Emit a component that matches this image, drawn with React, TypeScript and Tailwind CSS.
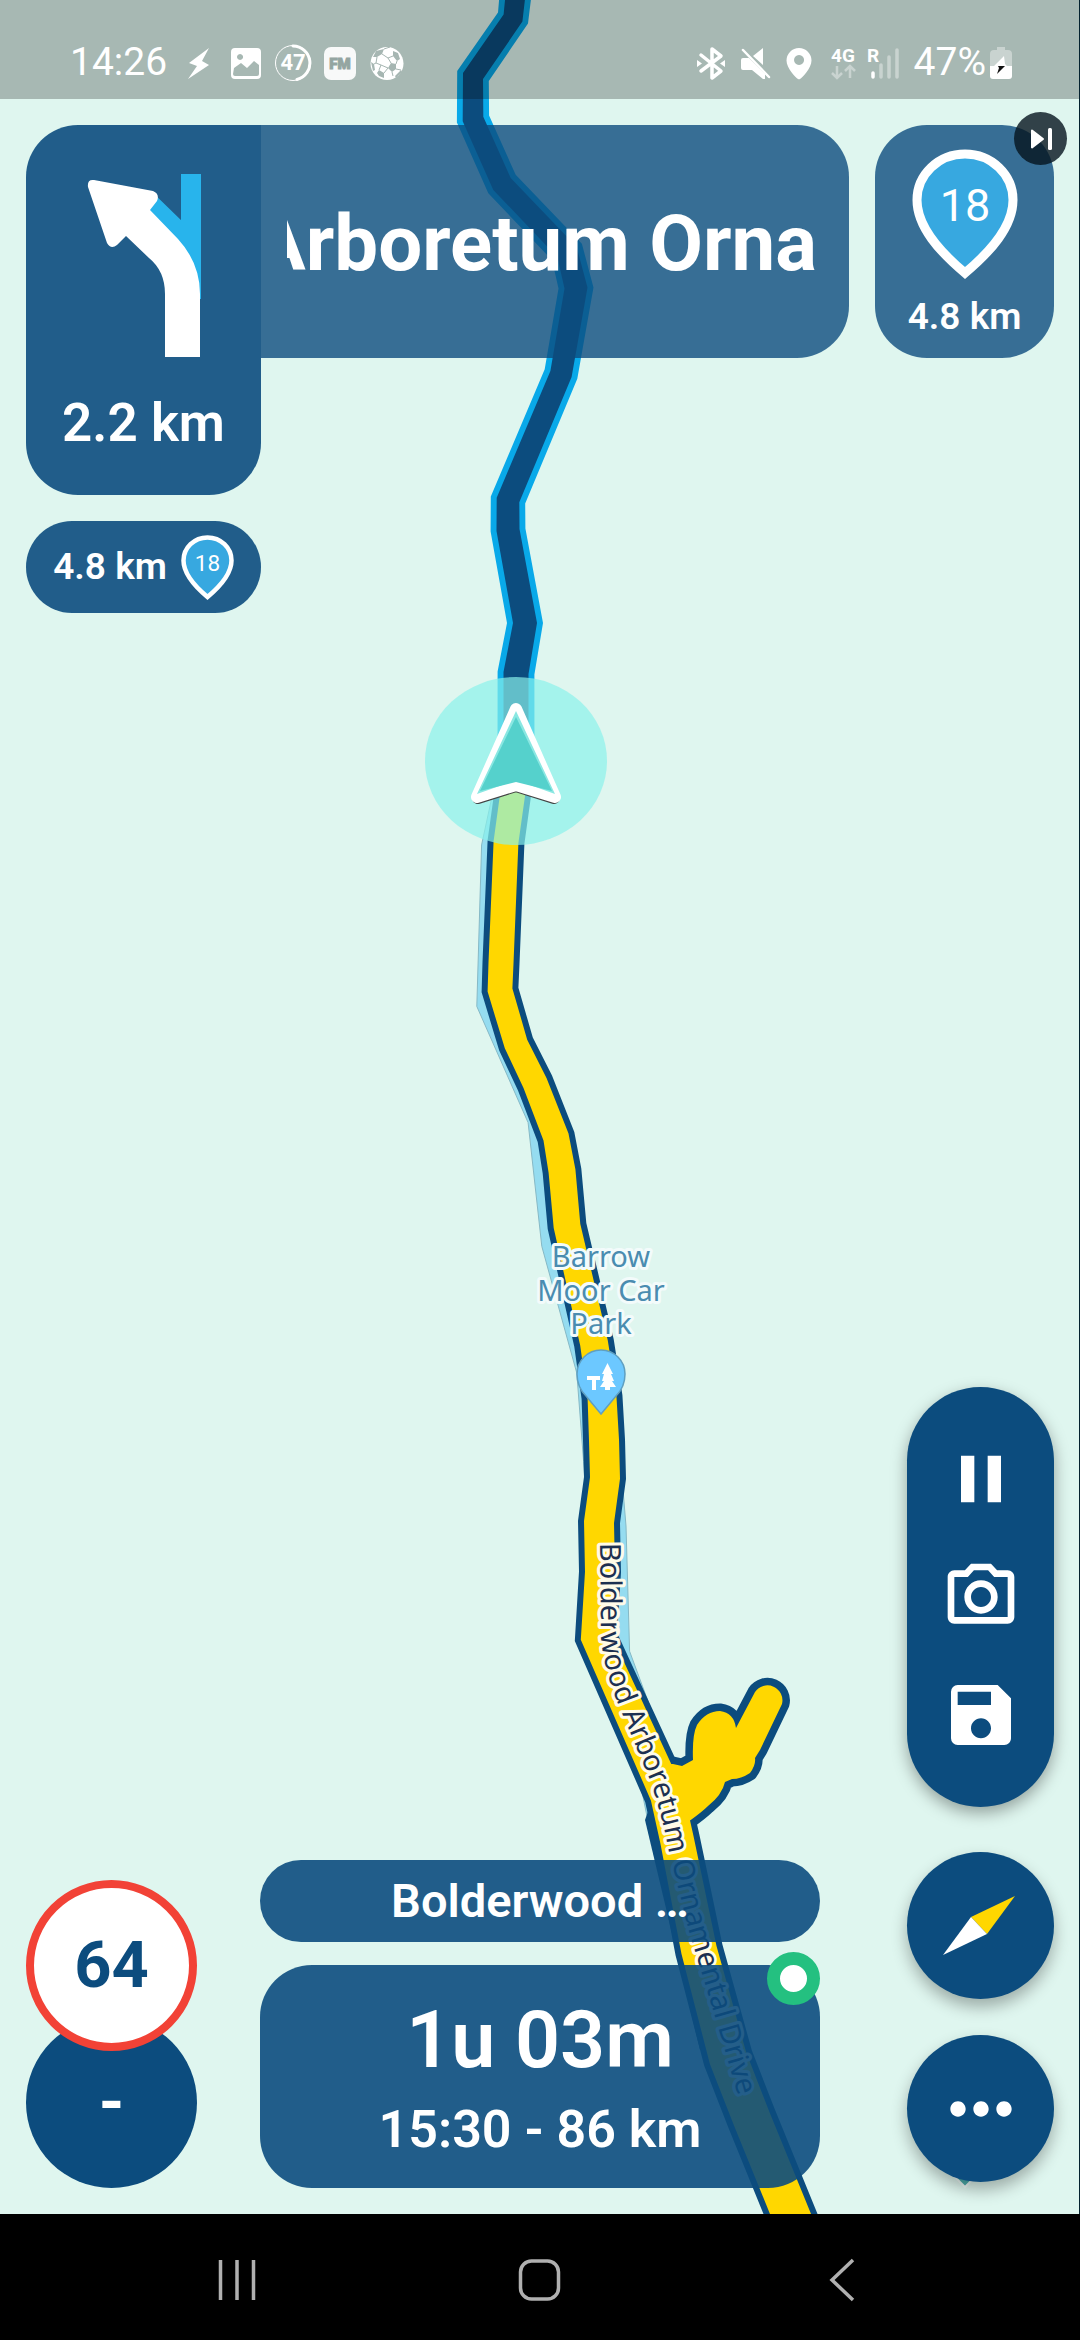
import { MdMoreHoriz, MdOutlineCameraAlt, MdPause, MdSave } from "react-icons/md";

type RoadPoint = [x: number, y: number, width: number];

// Builds a closed outline around a centre line whose width changes along the way
function ribbon(points: RoadPoint[], inset = 0) {
  const left: string[] = [];
  const right: string[] = [];
  points.forEach(([x, y, width], i) => {
    const prev = points[Math.max(i - 1, 0)];
    const next = points[Math.min(i + 1, points.length - 1)];
    const inLen = Math.hypot(x - prev[0], y - prev[1]) || 1;
    const outLen = Math.hypot(next[0] - x, next[1] - y) || 1;
    const dx = (x - prev[0]) / inLen + (next[0] - x) / outLen;
    const dy = (y - prev[1]) / inLen + (next[1] - y) / outLen;
    const len = Math.hypot(dx, dy);
    const half = width / 2 - inset;
    const nx = (-dy / len) * half;
    const ny = (dx / len) * half;
    left.push(`${(x + nx).toFixed(1)},${(y + ny).toFixed(1)}`);
    right.unshift(`${(x - nx).toFixed(1)},${(y - ny).toFixed(1)}`);
  });
  return [...left, ...right].join(" ");
}

const travelled: RoadPoint[] = [
  [516, -10, 32],
  [513, 18, 32],
  [473, 76, 33],
  [473, 119, 33],
  [502, 184, 33],
  [567, 252, 34],
  [576, 288, 35],
  [561, 374, 34],
  [508, 500, 35],
  [508, 530, 35],
  [525, 623, 36],
  [516, 673, 37],
  [516, 780, 37],
];

const ahead: RoadPoint[] = [
  [516, 770, 37],
  [506, 842, 37],
  [501, 963, 37],
  [500, 990, 37],
  [516, 1044, 36],
  [535, 1083, 37],
  [556, 1137, 38],
  [562, 1171, 39],
  [567, 1226, 39],
  [594, 1343, 40],
  [602, 1397, 41],
  [604, 1440, 42],
  [605, 1478, 42],
  [599, 1522, 42],
  [600, 1572, 42],
  [596, 1637, 43],
  [667, 1795, 46],
  [677, 1840, 46],
  [699, 1950, 48],
  [728, 2058, 50],
  [751, 2117, 50],
  [795, 2225, 50],
];

const sideStreet: RoadPoint[] = [
  [514, 775, 34],
  [499, 847, 35],
  [494, 1003, 35],
  [545, 1118, 35],
  [559, 1243, 35],
  [594, 1370, 35],
  [602, 1460, 37],
  [607, 1527, 38],
  [611, 1655, 38],
  [658, 1780, 36],
  [664, 1820, 32],
];

const carPark =
  "M655 1764 L673 1764 L682 1766 L693 1760 Q692 1735 697 1725 Q706 1711 720 1711 Q734 1713 736 1728 L755 1692 A15 15 0 0 1 782 1704 L760 1750 L755 1758 Q756 1765 750 1773 Q741 1779 732 1779 L725 1782 Q722 1795 708 1806 Q702 1812 688 1822 L680 1830 Z";

function MapCanvas() {
  return (
    <svg
      className="absolute inset-0 h-full w-full"
      viewBox="0 0 1080 2214"
      preserveAspectRatio="xMinYMin slice"
      fontFamily="'Noto Sans', sans-serif"
    >
      <polygon points={ribbon(sideStreet)} fill="#95dcf0" stroke="#86b9c6" strokeWidth="1" />
      <polygon points={ribbon(travelled)} fill="#09a9e9" />
      <polygon points={ribbon(travelled, 6)} fill="#0c4c7e" />
      <polygon points={ribbon(ahead)} fill="#0c4c7e" />
      <polygon points="650,1806 645,1820 674,1942 700,2050 712,2040 690,1900 664,1806" fill="#0c4c7e" />
      <path d={carPark} fill="none" stroke="#0c4c7e" strokeWidth="15" strokeLinejoin="round" />
      <path d={carPark} fill="#ffd700" />
      <polygon points={ribbon(ahead, 6)} fill="#ffd700" />

      <ellipse cx="516" cy="761" rx="91" ry="84" fill="#89f2eb" fillOpacity="0.69" />
      <g strokeLinejoin="round">
        <path d="M516 711 L478 798 L516 786 L554 798 Z" fill="#333" stroke="#444" strokeWidth="12" />
        <path d="M516 709 L477 797 L516 785 L555 797 Z" fill="#fff" stroke="#fff" strokeWidth="12" />
        <path d="M516 711 L477 794 L516 780 L555 794 Z" fill="#8ae7e2" />
        <path d="M516 717 L480 791 L516 782 L552 791 Z" fill="#55d1cc" />
      </g>

      <g
        fill="#4a8cb0"
        stroke="#f3fbfb"
        strokeWidth="6"
        strokeLinejoin="round"
        paintOrder="stroke"
        fontSize="29"
        textAnchor="middle"
      >
        <text x="601" y="1267">Barrow</text>
        <text x="601" y="1301">Moor Car</text>
        <text x="601" y="1334">Park</text>
      </g>

      <path
        d="M601 1414 L586 1396 C580 1390 577 1382 577 1374 A24 24 0 0 1 625 1374 C625 1382 622 1390 616 1396 Z"
        fill="#6cc8ff"
        stroke="#5f9fc0"
        strokeWidth="1.5"
      />
      <path
        d="M587 1376 H600 V1380 H596 V1390 H592 V1380 H587 Z M607.500 1363 L613 1374 H611 L614 1381 H612 L616 1387 H610 V1390 H605 V1387 H600 L604 1381 H602 L604 1374 H602 Z"
        fill="#fff"
      />

      <path id="street" fill="none" d="M600 1543 L601 1638 Q604 1672 622 1713 L650 1780 Q661 1812 667 1842 L688 1928 L713 2010 L745 2120" />
      <text
        fontSize="29"
        fill="#1d3050"
        stroke="#fffbe8"
        strokeWidth="6"
        strokeLinejoin="round"
        paintOrder="stroke"
      >
        <textPath href="#street">Bolderwood Arboretum Ornamental Drive</textPath>
      </text>

      <path d="M953 2175 L965 2187 L977 2175 Z" fill="#4fb0ae" stroke="#eefaf7" strokeWidth="2" />
    </svg>
  );
}

function StatusBar() {
  return (
    <header className="relative flex h-[99px] items-center justify-between bg-black/25 pt-[26px] pr-[67px] pl-[70px] text-[39px] text-white">
      <div className="flex items-center gap-[9px]">
        <span className="mr-1">14:26</span>
        <svg width="38" height="38" viewBox="0 0 38 38" fill="#fff">
          <path d="M29 4 L9 19 L17 22 L8 35 L29 21 L22 17 Z" />
        </svg>
        <svg width="38" height="38" viewBox="0 0 38 38" fill="#fff">
          <path
            fillRule="evenodd"
            d="M8 4 H30 A4 4 0 0 1 34 8 V31 A4 4 0 0 1 30 35 H8 A4 4 0 0 1 4 31 V8 A4 4 0 0 1 8 4 Z M7 24 L14 19 L20 24 L27 17 L32 21 V30 A2 2 0 0 1 30 32 H8 A2 2 0 0 1 6 30 Z M13 10 A3 3 0 1 0 13.100 10 Z"
          />
        </svg>
        <svg width="38" height="38" viewBox="0 0 38 38" fill="none" stroke="#fff">
          <circle cx="19" cy="19" r="17.500" strokeWidth="1" />
          <path d="M19 2 A17 17 0 0 1 23 35.500" strokeWidth="3" strokeLinecap="round" />
          <text x="19" y="26" fontSize="22" fontWeight="700" textAnchor="middle" fill="#fff" stroke="none">
            47
          </text>
        </svg>
        <svg width="38" height="38" viewBox="0 0 38 38">
          <rect x="3" y="3" width="32" height="33" rx="7" fill="#f8f9f9" />
          <text x="19" y="25" fontSize="15" fontWeight="900" textAnchor="middle" fill="#94a5a1" stroke="#94a5a1" strokeWidth="1">
            FM
          </text>
        </svg>
        <svg width="38" height="38" viewBox="0 0 38 38">
          <circle cx="19" cy="19.500" r="16.500" fill="#fff" />
          <path
            d="M8 7 L16 5 L14 10 L9 13 L5 13 Z M25 7 L30 9 L32 15 L29 17 L25 12 Z M3 18 L6 20 L7 26 L5 27 Z M23 19 L28 20 L28 25 L24 28 L20 24 Z M11 26 L16 29 L16 34 L11 32 L9 29 Z M33 26 L34 28 L28 34 L27 32 Z"
            fill="#a6b6b2"
          />
          <path
            d="M14 10 L20 14 L25 12 M20 14 L23 19 M9 13 L8 19 L6 20 M8 19 L13 21 L20 24 M13 21 L11 26 M16 29 L20 24 M24 28 L25 32 M28 20 L29 17 M28 25 L33 26 M16 5 L22 3"
            fill="none"
            stroke="#a6b6b2"
            strokeWidth="1"
          />
        </svg>
      </div>

      <div className="flex items-center gap-2.5">
        <svg width="34" height="38" viewBox="0 0 34 38">
          <path d="M7 11 L27 27 L18 34 V5 L27 12 L7 27" fill="none" stroke="#fff" strokeWidth="3.5" strokeLinecap="round" strokeLinejoin="round" />
          <path d="M3 16 L8 19.500 L3 23 Z M31 16 L26 19.500 L31 23 Z" fill="#fff" />
        </svg>
        <svg width="34" height="38" viewBox="0 0 34 38" fill="#fff">
          <path d="M25 4 V21 L15 12 Z M5 14 H11 L27 30 V35 H25 L14 26 H5 Q3 26 3 24 V16 Q3 14 5 14 Z" />
          <path d="M5 6 L31 33" stroke="#fff" strokeWidth="2.5" strokeLinecap="round" />
        </svg>
        <svg width="34" height="38" viewBox="0 0 34 38">
          <path
            fill="#fff"
            fillRule="evenodd"
            d="M17 4 A12.500 12.500 0 0 1 29.500 16.500 C29.500 24 20 34 18 35 Q17 35.500 16 35 C14 34 4.500 24 4.500 16.500 A12.500 12.500 0 0 1 17 4 Z M17 11 A5 5 0 1 0 17.100 11 Z"
          />
        </svg>
        <svg width="34" height="38" viewBox="0 0 34 38">
          <text x="17" y="18" fontSize="19" fontWeight="700" textAnchor="middle" fill="#fff">
            4G
          </text>
          <path d="M11 22 V34 M6 29 L11 34 L16 29 M24 34 V22 M19 27 L24 22 L29 27" fill="none" stroke="#c9d3d0" strokeWidth="2.500" />
        </svg>
        <svg width="34" height="38" viewBox="0 0 34 38" overflow="visible">
          <text x="-3" y="18" fontSize="19" fontWeight="700" fill="#fff">
            R
          </text>
          <path d="M3 29 V33" stroke="#fff" strokeWidth="3.5" strokeLinecap="round" />
          <path d="M11 21 V33 M19 13 V33 M27 6 V33" stroke="#c9d3d0" strokeWidth="3.5" strokeLinecap="round" />
        </svg>
        <div className="flex items-center gap-1">
          <span>47%</span>
          <svg width="22" height="38" viewBox="0 0 22 38">
            <path d="M7 3 H15 V6 H18 Q22 6 22 10 V22 H0 V10 Q0 6 4 6 H7 Z" fill="#c9d3d0" />
            <path d="M0 22 H22 V32 Q22 35 19 35 H3 Q0 35 0 32 Z" fill="#fff" />
            <path d="M14 12 L4 22 H17 L15 20 Z" fill="#fff" />
            <path d="M8 22 H15 L7 30 L9 24 Z" fill="#111" />
          </svg>
        </div>
      </div>
    </header>
  );
}

function WaypointPin({ className }: { className: string }) {
  return (
    <svg className={className} viewBox="0 0 106 130">
      <path
        d="M53 124 C28 103 5 78 5 51 A48 46 0 0 1 101 51 C101 78 78 103 53 124 Z"
        fill="#37a8e0"
        stroke="#fff"
        strokeWidth="9"
      />
      <text x="53" y="72" fontSize="45" textAnchor="middle" fill="#fff">
        18
      </text>
    </svg>
  );
}

function Directions() {
  return (
    <section className="flex items-start gap-[26px] pt-[26px] pr-[25px] pl-[26px]">
      <div className="flex min-w-0 flex-1 items-start">
        <div className="flex w-[235px] shrink-0 flex-col gap-[26px] text-white">
          <div className="flex h-[370px] flex-col items-center rounded-l-[52px] rounded-br-[52px] bg-[#0c4c7e]/90 pt-12">
            <svg width="124" height="184" viewBox="82 174 124 184">
              <path d="M191 175 V300 M148 203 L184 238 Q191 255 191 300" fill="none" stroke="#28b4ec" strokeWidth="20" />
              <path
                d="M165 358 V295 Q165 272 149 259 L126 237 L117 246 Q111 251 107 244 L88 188 Q87 180 94 181 L153 192 Q160 195 157 202 L150 211 L178 240 Q200 264 200 295 V358 Z"
                fill="#fff"
              />
            </svg>
            <p className="mt-9 text-[53px] leading-[60px] font-semibold">2.2 km</p>
          </div>
          <div className="flex h-[92px] items-center justify-center gap-3.5 rounded-full bg-[#0c4c7e]/90">
            <span className="text-[37px] font-semibold">4.8 km</span>
            <WaypointPin className="h-[65px] w-[53px]" />
          </div>
        </div>
        <div className="flex h-[233px] min-w-0 flex-1 items-center rounded-r-[52px] bg-[#0c4c7e]/80 pr-8 pb-2 pl-[26px]">
          <h1 className="flex h-[76px] w-full justify-end overflow-hidden text-[78px] leading-[88px] font-bold whitespace-nowrap text-white">
            Arboretum Orna
          </h1>
        </div>
      </div>
      <div className="relative flex h-[233px] w-[179px] flex-col items-center rounded-[52px] bg-[#0c4c7e]/80 pt-6 text-white">
        <WaypointPin className="h-[130px] w-[106px]" />
        <p className="mt-4 text-[37px] leading-[44px] font-semibold">4.8 km</p>
        <button aria-label="Skip waypoint" className="absolute -top-[13px] -right-[13px] flex size-[53px] items-center justify-center rounded-full bg-[#05141e]/80">
          <svg width="24" height="24" viewBox="0 0 24 24" fill="#fff">
            <path d="M3 3.500 L14 12 L3 20.500 Z" stroke="#fff" strokeWidth="2" strokeLinejoin="round" />
            <rect x="19" y="1" width="4" height="22" rx="1.500" />
          </svg>
        </button>
      </div>
    </section>
  );
}

function TripPanel() {
  return (
    <section className="flex items-end pr-[25px] pb-[26px] pl-[26px] text-white">
      <div className="flex w-[171px] shrink-0 flex-col">
        <div className="relative flex size-[171px] items-center justify-center rounded-full border-8 border-[#f24236] bg-white text-[65px] font-bold text-[#0c4c7e]">
          64
        </div>
        <div className="-mt-[34px] flex size-[171px] items-center justify-center rounded-full bg-[#0c4c7e] text-[65px] font-bold">
          -
        </div>
      </div>
      <div className="mr-[87px] ml-[63px] flex min-w-0 flex-1 flex-col gap-[23px]">
        <div className="flex h-[82px] items-center justify-center rounded-full bg-[#0c4c7e]/90 text-[47px] font-semibold">
          Bolderwood …
        </div>
        <div className="relative flex h-[223px] flex-col items-center justify-center rounded-[52px] bg-[#0c4c7e]/90 pt-2.5 font-semibold">
          <p className="text-[79px] leading-[96px]">1u 03m</p>
          <p className="text-[52px] leading-[84px]">15:30 - 86 km</p>
          <span className="absolute -top-[13px] right-0 size-[53px] rounded-full border-[13px] border-[#24c080] bg-white" />
        </div>
      </div>
      <div className="mb-[6px] flex w-[147px] shrink-0 flex-col">
        <div className="flex flex-col items-center gap-[38px] rounded-full bg-[#0c4c7e] py-[52px] shadow-[0_6px_16px_rgba(0,0,0,0.35)]">
          <button aria-label="Pause">
            <MdPause size={80} />
          </button>
          <button aria-label="Take photo">
            <MdOutlineCameraAlt size={80} />
          </button>
          <button aria-label="Save">
            <MdSave size={80} />
          </button>
        </div>
        <button aria-label="Compass" className="mt-[45px] size-[147px] rounded-full bg-[#0c4c7e] shadow-[0_8px_16px_rgba(0,0,0,0.3)]">
          <svg viewBox="0 0 147 147">
            <path d="M108 44 L64 65 L80 82 Z" fill="#ffd700" />
            <path d="M36 103 L64 65 L80 82 Z" fill="#fff" />
          </svg>
        </button>
        <button aria-label="More" className="mt-9 flex size-[147px] items-center justify-center rounded-full bg-[#0c4c7e] shadow-[0_8px_16px_rgba(0,0,0,0.3)]">
          <MdMoreHoriz size={92} />
        </button>
      </div>
    </section>
  );
}

function SystemNav() {
  return (
    <nav className="flex h-[126px] items-center justify-between bg-black px-[213px] pt-1.5">
      <button aria-label="Recent apps">
        <svg width="48" height="48" viewBox="0 0 48 48" stroke="#b0b0b0" strokeWidth="3.5">
          <path d="M7.500 4 V44 M24 4 V44 M40.500 4 V44" />
        </svg>
      </button>
      <button aria-label="Home">
        <svg width="48" height="48" viewBox="0 0 48 48" fill="none" stroke="#b0b0b0" strokeWidth="3.5">
          <rect x="4.500" y="5" width="38" height="38" rx="11" />
        </svg>
      </button>
      <button aria-label="Back">
        <svg width="48" height="48" viewBox="0 0 48 48" fill="none" stroke="#b0b0b0" strokeWidth="3.5">
          <path d="M34 4 L13 24 L34 44" />
        </svg>
      </button>
    </nav>
  );
}

export default function App() {
  return (
    <div className="flex min-h-screen flex-col font-[Roboto,sans-serif]">
      <main className="relative flex flex-1 flex-col overflow-hidden border-r border-[#04222f] bg-[#dff6ef]">
        <MapCanvas />
        <StatusBar />
        <div className="relative flex flex-1 flex-col justify-between">
          <Directions />
          <TripPanel />
        </div>
      </main>
      <SystemNav />
    </div>
  );
}
